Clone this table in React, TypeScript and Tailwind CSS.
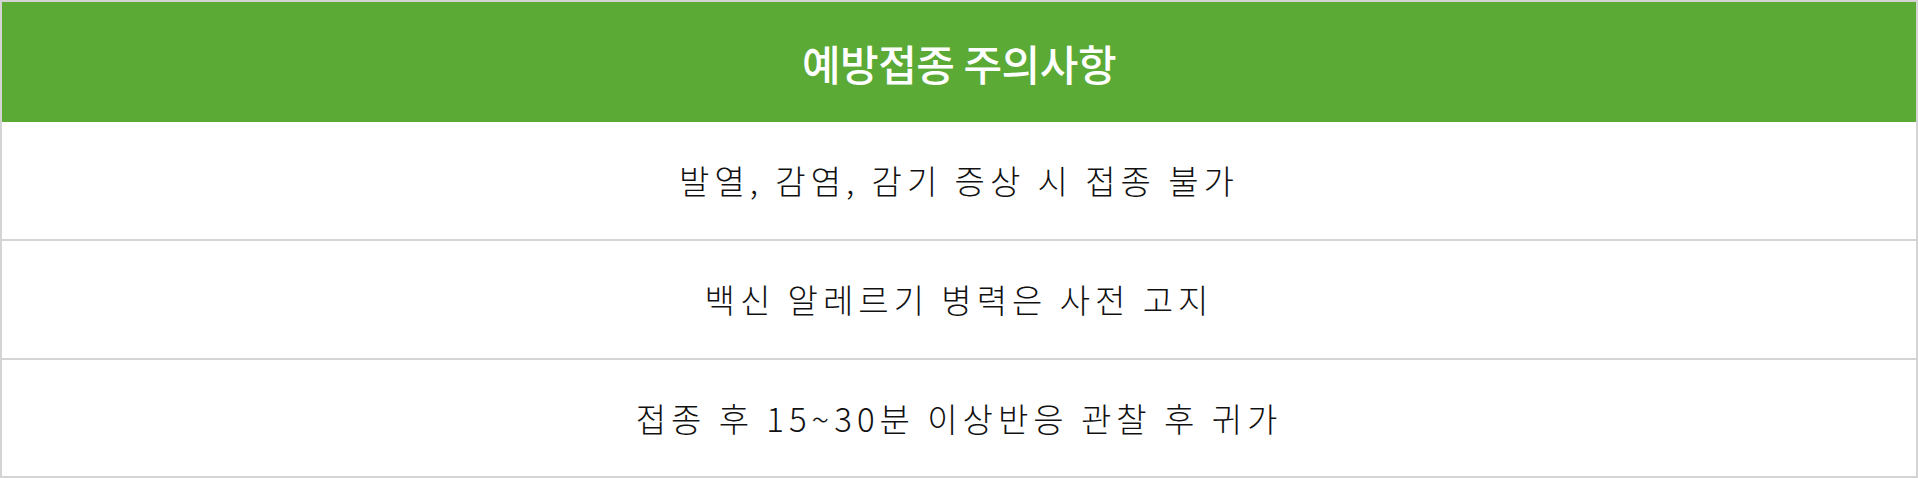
export default function App() {
  const rows = [
    "발열, 감염, 감기 증상 시 접종 불가",
    "백신 알레르기 병력은 사전 고지",
    "접종 후 15~30분 이상반응 관찰 후 귀가",
  ]

  return (
    <div
      className="w-[1918px] h-[478px] bg-white border-2 border-[#d4d4d4]"
      style={{ fontFamily: '"Noto Sans CJK KR", "Noto Sans", sans-serif' }}
    >
      {/* Title */}
      <div className="h-[120px] bg-[#5aaa35] flex items-center justify-center">
        <h2 className="text-[42px] font-medium text-white tracking-[-0.5px]">
          예방접종 주의사항
        </h2>
      </div>

      {/* Items */}
      {rows.map((row, i) => (
        <div
          key={i}
          className={
            i < rows.length - 1
              ? "h-[119px] border-b-2 border-[#d4d4d4] flex items-center justify-center"
              : "h-[117px] flex items-center justify-center"
          }
        >
          <p className="text-[33px] font-light text-[#111] tracking-[5px]">{row}</p>
        </div>
      ))}
    </div>
  )
}
